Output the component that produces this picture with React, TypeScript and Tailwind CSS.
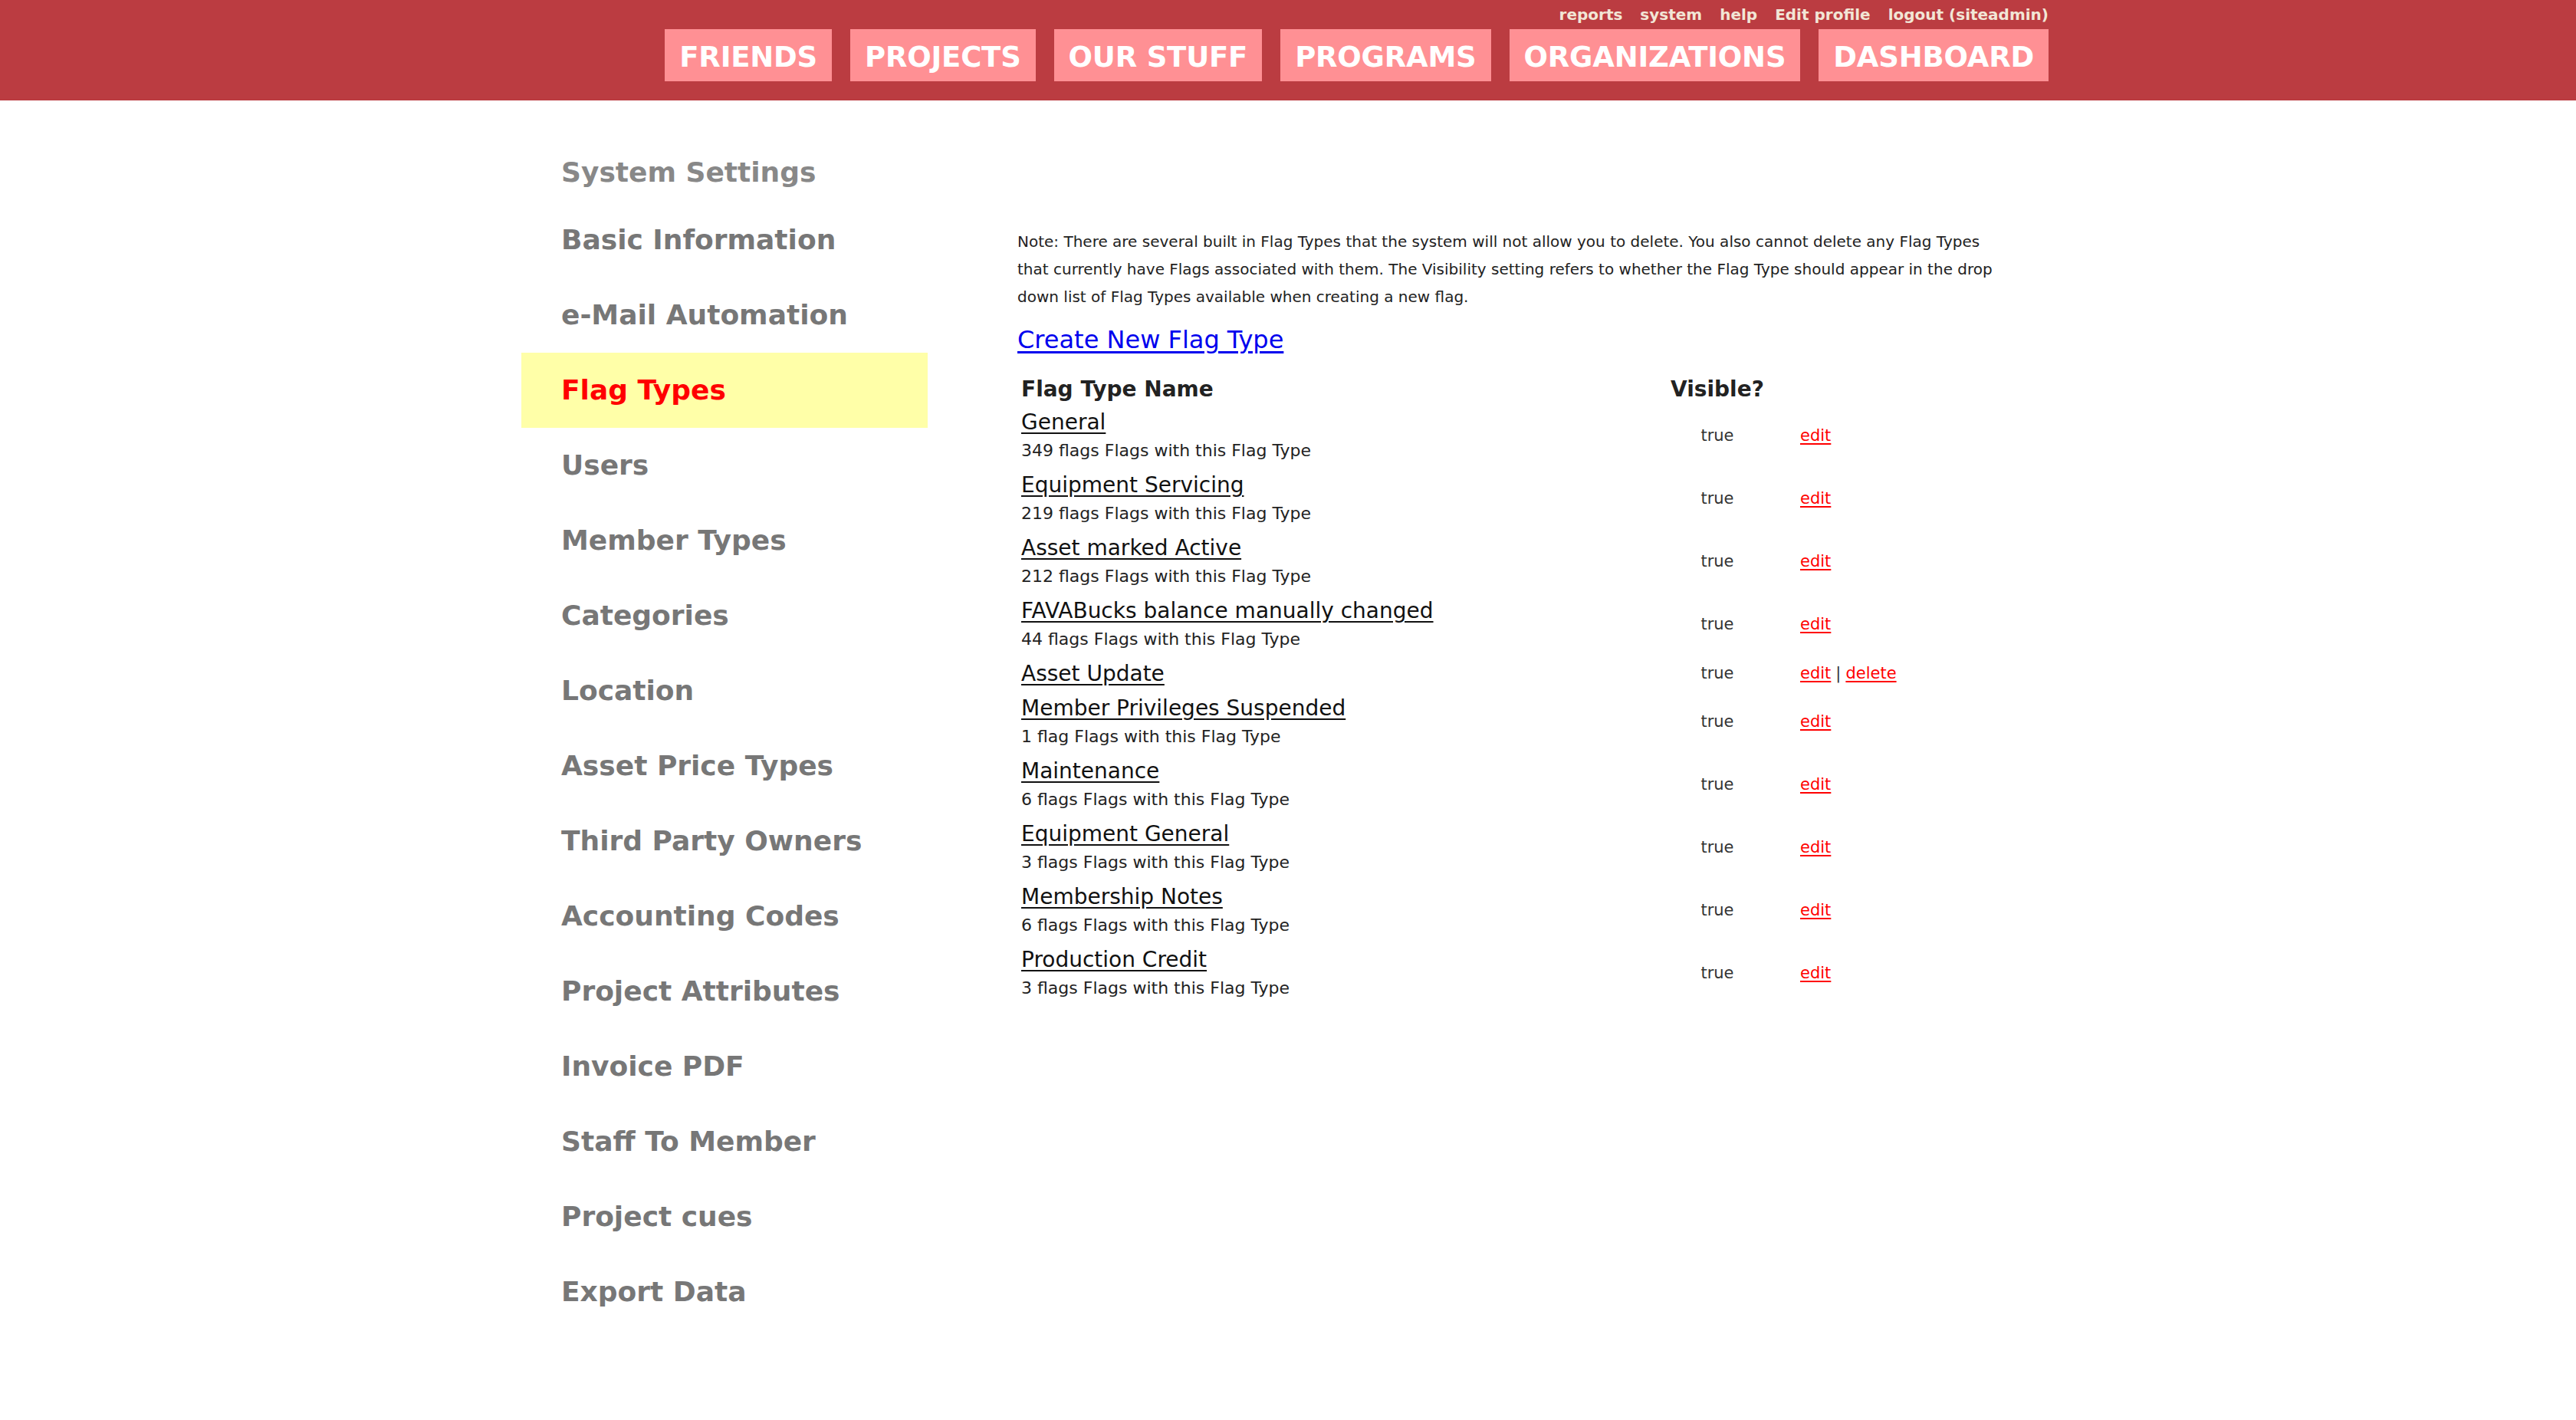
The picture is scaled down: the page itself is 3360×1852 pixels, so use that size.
const FONT = "font-['DejaVu_Sans',sans-serif]"

const topLinks = ['reports', 'system', 'help', 'Edit profile', 'logout (siteadmin)']
const navItems = ['FRIENDS', 'PROJECTS', 'OUR STUFF', 'PROGRAMS', 'ORGANIZATIONS', 'DASHBOARD']

const sideItems = [
  'Basic Information',
  'e-Mail Automation',
  'Flag Types',
  'Users',
  'Member Types',
  'Categories',
  'Location',
  'Asset Price Types',
  'Third Party Owners',
  'Accounting Codes',
  'Project Attributes',
  'Invoice PDF',
  'Staff To Member',
  'Project cues',
  'Export Data',
]

const flagTypes = [
  { name: 'General', count: '349 flags' },
  { name: 'Equipment Servicing', count: '219 flags' },
  { name: 'Asset marked Active', count: '212 flags' },
  { name: 'FAVABucks balance manually changed', count: '44 flags' },
  { name: 'Asset Update', count: null },
  { name: 'Member Privileges Suspended', count: '1 flag' },
  { name: 'Maintenance', count: '6 flags' },
  { name: 'Equipment General', count: '3 flags' },
  { name: 'Membership Notes', count: '6 flags' },
  { name: 'Production Credit', count: '3 flags' },
]

function Header() {
  return (
    <header className="bg-[#bb3c41] h-[131px]">
      <div className="w-[2000px] mx-auto pr-[8px] flex flex-col items-end">
        <div className="flex gap-[23px] pt-[7px] h-[38px] text-[20px] leading-[24px] font-bold text-[#f2e6d6]">
          {topLinks.map((l) => (
            <a key={l} href="#" className="hover:underline">
              {l}
            </a>
          ))}
        </div>
        <nav className="flex gap-[24px]">
          {navItems.map((n) => (
            <a
              key={n}
              href="#"
              className="h-[68px] px-[19px] pt-[6px] flex items-center bg-[#ff9094] text-white font-bold text-[37px] tracking-[-0.2px]"
            >
              {n}
            </a>
          ))}
        </nav>
      </div>
    </header>
  )
}

function Sidebar() {
  return (
    <aside className="w-[530px] shrink-0 pt-[69px]">
      <div className="pl-[52px] h-[50px] leading-[50px] mb-[14px] text-[36px] font-bold text-[#888888]">
        System Settings
      </div>
      {sideItems.map((item) => {
        const active = item === 'Flag Types'
        return (
          <a
            key={item}
            href="#"
            className={`h-[98px] pl-[52px] flex items-center text-[36px] font-bold ${
              active ? 'bg-[#ffffa8] text-[#ff0000]' : 'text-[#777777]'
            }`}
          >
            {item}
          </a>
        )
      })}
    </aside>
  )
}

function FlagTable() {
  return (
    <div className="mt-[24px] w-[1180px]">
      <div className="grid grid-cols-[847px_132px_1fr] h-[41px] items-center text-[28px] font-bold text-[#222222]">
        <div className="px-[5px]">Flag Type Name</div>
        <div className="px-[5px]">Visible?</div>
        <div />
      </div>
      {flagTypes.map((f) => (
        <div key={f.name} className="grid grid-cols-[847px_132px_1fr] items-center py-[4px]">
          <div className="px-[5px]">
            <a href="#" className="block leading-[37px] text-[28px] text-[#111111] underline underline-offset-[4px]">
              {f.name}
            </a>
            {f.count && (
              <div className="leading-[37px] text-[22px] text-[#222222]">{f.count} Flags with this Flag Type</div>
            )}
          </div>
          <div className="text-center text-[21px] text-[#333333]">true</div>
          <div className="pl-[42px] text-[21px] text-[#333333]">
            <a href="#" className="text-[#ff0000] underline underline-offset-[3px]">
              edit
            </a>
            {f.count === null && (
              <>
                <span className="mx-[6px]">|</span>
                <a href="#" className="text-[#ff0000] underline underline-offset-[3px]">
                  delete
                </a>
              </>
            )}
          </div>
        </div>
      ))}
    </div>
  )
}

export default function App() {
  return (
    <div className={`min-h-screen bg-white ${FONT}`}>
      <Header />
      <main className="w-[2000px] mx-auto flex">
        <Sidebar />
        <section className="ml-[117px] w-[1300px] pt-[166px]">
          <p className="text-[20px] leading-[36px] text-[#222222]">
            Note: There are several built in Flag Types that the system will not allow you to delete. You also cannot
            delete any Flag Types that currently have Flags associated with them. The Visibility setting refers to
            whether the Flag Type should appear in the drop down list of Flag Types available when creating a new flag.
          </p>
          <a href="#" className="inline-block mt-[18px] text-[32px] leading-[40px] text-[#0000ee] underline underline-offset-[4px]">
            Create New Flag Type
          </a>
          <FlagTable />
        </section>
      </main>
    </div>
  )
}
